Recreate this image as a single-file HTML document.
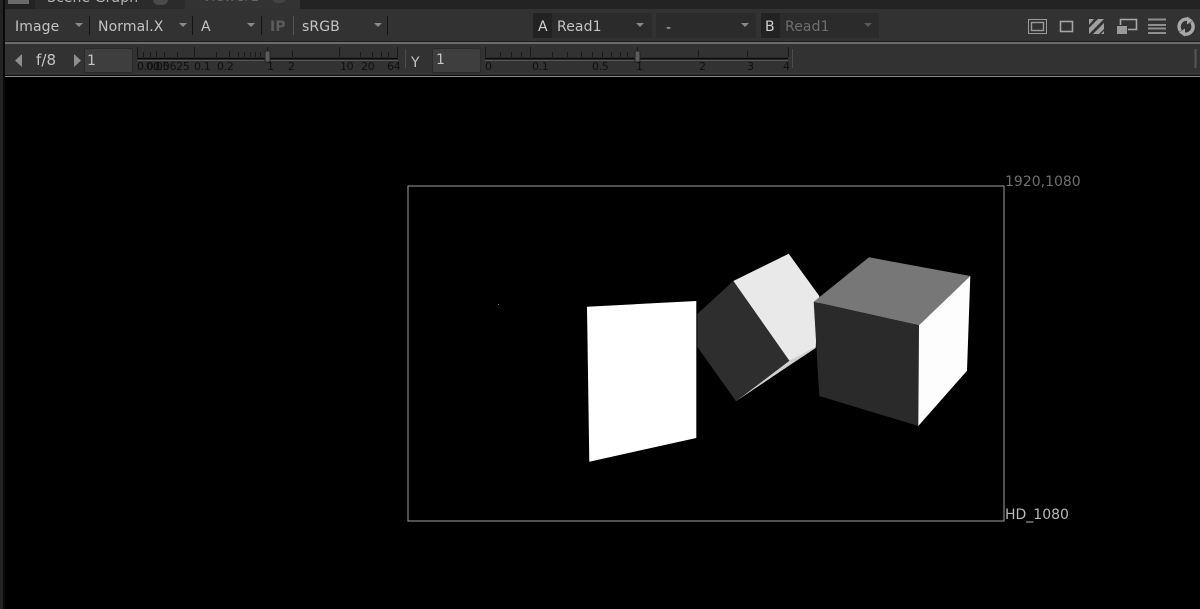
<!DOCTYPE html>
<html>
<head>
<meta charset="utf-8">
<style>
html,body{margin:0;padding:0;background:#000;}
#r{position:relative;width:1200px;height:609px;overflow:hidden;background:#000;font-family:"DejaVu Sans","Liberation Sans",sans-serif;filter:blur(.35px);}
.b{position:absolute;}
.t{position:absolute;white-space:nowrap;color:#c4c4c4;font-size:14px;line-height:16px;letter-spacing:.1px;}
.s{position:absolute;white-space:nowrap;color:#101010;font-size:11px;line-height:12px;letter-spacing:-.35px;}
.a{position:absolute;width:0;height:0;border-left:4px solid transparent;border-right:4px solid transparent;border-top:4px solid #8a8a8a;}
.sep{position:absolute;width:1px;background:#151515;}
svg{position:absolute;left:0;top:0;}
</style>
</head>
<body>
<div id="r">
<div class="b" style="left:0;top:0;width:1200px;height:9px;background:#232323"></div>
<div class="b" style="left:8px;top:0;width:21px;height:4px;background:#6a6a6a"></div>
<div class="b" style="left:35px;top:0;width:150px;height:9px;background:#2b2b2b"></div>
<div class="t" style="left:47px;top:-10px;color:#b5b5b5">Scene Graph</div>
<div class="b" style="left:153px;top:-6px;width:15px;height:11px;border-radius:8px;background:#4a4a4a"></div>
<div class="b" style="left:185px;top:0;width:115px;height:9px;background:#333"></div>
<div class="t" style="left:202px;top:-11px;color:#666">Viewer1</div>
<div class="b" style="left:272px;top:-7px;width:14px;height:10px;border-radius:7px;background:#444"></div>

<div class="b" style="left:0;top:9px;width:1200px;height:32px;background:#323232"></div>
<div class="b" style="left:0;top:41px;width:1200px;height:1px;background:#1c1c1c"></div>
<div class="b" style="left:0;top:42px;width:1200px;height:2px;background:#6b6b6b"></div>
<div class="b" style="left:0;top:44px;width:1200px;height:31px;background:#323232"></div>
<div class="b" style="left:0;top:75px;width:1200px;height:1px;background:#0c0c0c"></div>
<div class="b" style="left:0;top:76px;width:1200px;height:1px;background:#8a8a8a"></div>
<div class="b" style="left:0;top:0;width:3px;height:609px;background:#232323"></div>
<div class="b" style="left:3px;top:0;width:2px;height:609px;background:#0a0a0a"></div>

<div class="t" style="left:15px;top:19px">Image</div>
<div class="a" style="left:75px;top:23px"></div>
<div class="sep" style="left:89px;top:16px;height:19px"></div>
<div class="t" style="left:98px;top:19px">Normal.X</div>
<div class="a" style="left:179px;top:23px"></div>
<div class="sep" style="left:192px;top:16px;height:19px"></div>
<div class="t" style="left:201px;top:19px">A</div>
<div class="a" style="left:247px;top:23px"></div>
<div class="sep" style="left:261px;top:16px;height:19px"></div>
<div class="t" style="left:270px;top:19px;color:#5c5c5c;font-weight:bold">IP</div>
<div class="sep" style="left:293px;top:16px;height:19px;background:#555"></div>
<div class="t" style="left:302px;top:19px">sRGB</div>
<div class="a" style="left:374px;top:23px"></div>
<div class="sep" style="left:387px;top:16px;height:19px"></div>

<div class="b" style="left:533px;top:13px;width:19px;height:25px;background:#222"></div>
<div class="b" style="left:552px;top:13px;width:100px;height:25px;background:#2b2b2b"></div>
<div class="t" style="left:538px;top:19px;color:#d0d0d0">A</div>
<div class="t" style="left:557px;top:19px">Read1</div>
<div class="a" style="left:636px;top:23px"></div>
<div class="b" style="left:656px;top:13px;width:100px;height:25px;background:#2b2b2b"></div>
<div class="t" style="left:666px;top:20px">-</div>
<div class="a" style="left:741px;top:23px"></div>
<div class="b" style="left:761px;top:13px;width:19px;height:25px;background:#222"></div>
<div class="b" style="left:780px;top:13px;width:99px;height:25px;background:#2b2b2b"></div>
<div class="t" style="left:765px;top:19px;color:#d0d0d0">B</div>
<div class="t" style="left:785px;top:19px;color:#6e6e6e">Read1</div>
<div class="a" style="left:864px;top:23px;border-top-color:#5a5a5a"></div>

<svg width="1200" height="609" viewBox="0 0 1200 609">
<!-- top right icons -->
<g fill="none" stroke="#9a9a9a">
<rect x="1028.5" y="19.5" width="18" height="14" stroke-width="1"/>
<rect x="1031.5" y="22.5" width="12" height="8" stroke-width="1.4"/>
<rect x="1060.5" y="21.5" width="12" height="10" stroke-width="1.6" stroke="#a5a5a5"/>
</g>
<g fill="#a0a0a0">
<path d="M1089 19h5l-5 6zM1098 19h6l-15 15v-6zM1104 23v6l-5 5h-6zM1104 31v3h-3z"/>
</g>
<rect x="1117" y="26" width="10" height="8" fill="#999"/>
<path d="M1120.500 25V19.500H1136.500V29.500H1128" fill="none" stroke="#a8a8a8" stroke-width="1.600"/>
<path d="M1148 19.500h18M1148 25h18M1148 28.500h18M1148 33h18" stroke="#8f8f8f" stroke-width="2" fill="none"/>
<!-- sync icon -->
<g fill="none" stroke="#a8a8a8" stroke-width="3.400">
<path d="M1189 19.500A7.500 7.500 0 0 0 1180.500 31"/>
<path d="M1183 33.700A7.500 7.500 0 0 0 1191.500 22"/>
</g>
<path d="M1187 16.500l6 4-6 4zM1185 28.500v8l-6-4z" fill="#a8a8a8"/>
<!-- nav arrows -->
<path d="M22 54v13l-7-6.500z" fill="#8e8e8e"/>
<path d="M74 54v13l7-6.500z" fill="#8e8e8e"/>
<!-- slider 1 -->
<path d="M137 58.500H398" stroke="#0c0c0c" stroke-width="1.500"/>
<path d="M137 60.500H398" stroke="#555" stroke-width="1"/>
<g stroke="#181818" stroke-width="1">
<path d="M137.500 47V57M143.500 52V57M150.500 52V57M156.500 51V57M164.500 52V57M177.500 52V57M194.500 47V57M216.500 52V57M229.500 51V57M238.500 52V57M244.500 52V57M250.500 52V57M255.500 52V57M260.500 52V57M267.500 47V57M292.500 50V57M339.500 47V57M360.500 52V57M372.500 52V57M381.500 52V57M388.500 52V57M397.500 47V57"/>
</g>
<rect x="265" y="51" width="5" height="11" rx="1" fill="#5c5c5c" stroke="#222"/>
<!-- slider 2 -->
<path d="M485 58.500H788" stroke="#0c0c0c" stroke-width="1.500"/>
<path d="M485 60.500H788" stroke="#555" stroke-width="1"/>
<g stroke="#181818" stroke-width="1">
<path d="M485.500 47V57M500.500 52V57M511.500 52V57M521.500 52V57M530.500 47V57M552.500 52V57M567.500 52V57M581.500 52V57M592.500 52V57M602.500 52V57M611.500 52V57M620.500 52V57M627.500 52V57M637.500 47V57M698.500 50V57M747.500 50V57M788.500 47V57"/>
</g>
<rect x="635" y="51" width="5" height="11" rx="1" fill="#5c5c5c" stroke="#222"/>
<path d="M1195.500 49V68" stroke="#555" stroke-width="2"/>
<path d="M405.500 49V68" stroke="#4c4c4c" stroke-width="1"/>
<path d="M792.500 49V68" stroke="#4c4c4c" stroke-width="1"/>
<!-- frame -->
<rect x="408" y="186" width="596" height="335" fill="none" stroke="#858585" stroke-width="1.200"/>
<rect x="498" y="304" width="1" height="1" fill="#777"/>
<!-- shapes -->
<polygon points="587,306.700 696.300,301 696.300,438 589.300,461.700" fill="#fff"/>
<polygon points="736,401.300 789.300,360.700 815.700,345 815.700,348 790,365" fill="#d0d0d0"/>
<polygon points="733.300,281 788.700,253.700 819.300,296 815.700,346.700 789.300,360.700" fill="#e9e9e9"/>
<polygon points="733.300,281 697.300,314 697.300,346.700 736,401.300 789.300,360.700" fill="#2e2e2e"/>
<polygon points="813.700,301.700 869,257.300 970.300,276 919,325.300" fill="#777"/>
<polygon points="813.700,301.700 919,325.300 918.300,426 819.300,396" fill="#2a2a2a"/>
<polygon points="919,325.300 970.300,276 967,370.700 918.300,426" fill="#fdfdfd"/>
</svg>

<div class="b" style="left:84px;top:48px;width:47px;height:23px;background:#3e3e3e;border:1px solid #2a2a2a;border-radius:2px"></div>
<div class="t" style="left:87px;top:53px">1</div>
<div class="t" style="left:36px;top:52px;font-size:15px">f/8</div>
<div class="s" style="left:137px;top:61px">0.01</div>
<div class="s" style="left:146px;top:61px">0.05</div>
<div class="s" style="left:153px;top:61px">0.0625</div>
<div class="s" style="left:194px;top:61px">0.1</div>
<div class="s" style="left:217px;top:61px">0.2</div>
<div class="s" style="left:267px;top:61px">1</div>
<div class="s" style="left:288px;top:61px">2</div>
<div class="s" style="left:340px;top:61px">10</div>
<div class="s" style="left:361px;top:61px">20</div>
<div class="s" style="left:387px;top:61px">64</div>

<div class="t" style="left:411px;top:55px">Y</div>
<div class="b" style="left:432px;top:48px;width:47px;height:23px;background:#3e3e3e;border:1px solid #2a2a2a;border-radius:2px"></div>
<div class="t" style="left:436px;top:52px">1</div>
<div class="s" style="left:485px;top:61px">0</div>
<div class="s" style="left:532px;top:61px">0.1</div>
<div class="s" style="left:592px;top:61px">0.5</div>
<div class="s" style="left:636px;top:61px">1</div>
<div class="s" style="left:699px;top:61px">2</div>
<div class="s" style="left:747px;top:61px">3</div>
<div class="s" style="left:783px;top:61px">4</div>

<div class="t" style="left:1005px;top:174px;color:#6f6f6f;letter-spacing:0">1920,1080</div>
<div class="t" style="left:1005px;top:507px;color:#b8b8b8;letter-spacing:0">HD_1080</div>
</div>
</body>
</html>
